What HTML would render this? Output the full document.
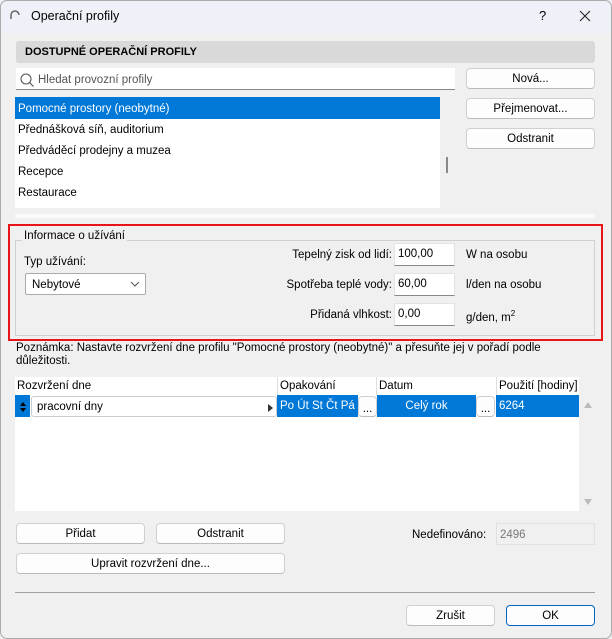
<!DOCTYPE html><html><head><meta charset="utf-8"><style>
*{box-sizing:border-box;margin:0;padding:0}
body{width:612px;height:639px;overflow:hidden;background:#fff;font-family:"Liberation Sans",sans-serif;font-size:11.5px;color:#000;position:relative}
.a{position:absolute}
.win{left:0;top:0;width:612px;height:639px;background:#f0f0f0;overflow:hidden}
.frame{left:0;top:0;width:612px;height:639px;border:1px solid #aaa;border-radius:7px;z-index:5}
.btn{position:absolute;background:#fdfdfd;border:1px solid #d0d0d0;border-bottom-color:#bbb;border-radius:4px;text-align:center;line-height:19px;padding-top:1px}
.inp{position:absolute;background:#fff;border:1px solid #e3e3e3;border-bottom:1px solid #888;padding-left:3px;padding-top:1px;line-height:19px}
.row{position:absolute;left:19px;height:21px;line-height:23px}
.lbl{position:absolute;right:220px;text-align:right}
.blue{position:absolute;background:#0078d7;color:#fff;height:22px;line-height:23px}
</style></head><body>
<div class="a win">
<div class="a" style="left:0;top:0;width:612px;height:33px;background:#eef1f7"></div>
<svg class="a" style="left:9px;top:9px" width="12" height="12"><path d="M2 10 V6 A4 4 0 0 1 10 6" fill="none" stroke="#666" stroke-width="1.5"/></svg>
<div class="a" style="left:31px;top:9px;font-size:12.5px">Operační profily</div>
<div class="a" style="left:539px;top:8px;font-size:13px">?</div>
<svg class="a" style="left:579px;top:10px" width="12" height="12"><path d="M1 1L11 11M11 1L1 11" stroke="#222" stroke-width="1.1"/></svg>

<div class="a" style="left:16px;top:41px;width:579px;height:22px;background:#d9d9d9;border-radius:3px"></div>
<div class="a" style="left:25px;top:46px;font-weight:bold;font-size:11px">DOSTUPNÉ OPERAČNÍ PROFILY</div>

<div class="a" style="left:16px;top:68px;width:439px;height:22px;background:#fff;border-bottom:1px solid #888"></div>
<svg class="a" style="left:19px;top:72px" width="16" height="16"><circle cx="7" cy="7" r="5" fill="none" stroke="#555" stroke-width="1.1"/><path d="M10.5 10.5L14.5 14.5" stroke="#555" stroke-width="1.2"/></svg>
<div class="a" style="left:38px;top:74px;color:#555">Hledat provozní profily</div>

<div class="btn" style="left:466px;top:68px;width:129px;height:21px">Nová...</div>
<div class="btn" style="left:466px;top:98px;width:129px;height:21px">Přejmenovat...</div>
<div class="btn" style="left:466px;top:128px;width:129px;height:21px">Odstranit</div>

<div class="a" style="left:15px;top:97px;width:425px;height:111px;background:#fff"></div>
<div class="a" style="left:15px;top:97px;width:425px;height:22px;background:#0078d7"></div>
<div class="row" style="top:98px;left:18px;color:#fff">Pomocné prostory (neobytné)</div>
<div class="row" style="top:119px;left:18px">Přednášková síň, auditorium</div>
<div class="row" style="top:140px;left:18px">Předváděcí prodejny a muzea</div>
<div class="row" style="top:161px;left:18px">Recepce</div>
<div class="row" style="top:182px;left:18px">Restaurace</div>
<div class="a" style="left:446px;top:157px;width:2px;height:16px;background:#888"></div>
<div class="a" style="left:15px;top:214px;width:580px;height:4px;background:#fafafa"></div>

<div class="a" style="left:8px;top:224px;width:595px;height:117px;border:2px solid #e8141a"></div>
<div class="a" style="left:15px;top:240px;width:580px;height:96px;border:1px solid #d0d0d0"></div>
<div class="a" style="left:22px;top:230px;background:#f0f0f0;padding:0 2px">Informace o užívání</div>
<div class="a" style="left:24px;top:256px">Typ užívání:</div>
<div class="a" style="left:25px;top:273px;width:121px;height:22px;background:#fff;border:1px solid #aaa;border-radius:2px;padding-left:6px;padding-top:1px;line-height:20px">Nebytové</div>
<svg class="a" style="left:130px;top:281px" width="10" height="6"><path d="M1 1L5 5L9 1" fill="none" stroke="#555"/></svg>

<div class="lbl" style="top:249px">Tepelný zisk od lidí:</div>
<div class="lbl" style="top:279px">Spotřeba teplé vody:</div>
<div class="lbl" style="top:309px">Přidaná vlhkost:</div>
<div class="inp" style="left:394px;top:243px;width:61px;height:23px">100,00</div>
<div class="inp" style="left:394px;top:273px;width:61px;height:23px">60,00</div>
<div class="inp" style="left:394px;top:303px;width:61px;height:23px">0,00</div>
<div class="a" style="left:466px;top:249px">W na osobu</div>
<div class="a" style="left:466px;top:279px">l/den na osobu</div>
<div class="a" style="left:466px;top:309px">g/den, m<sup style="font-size:8px">2</sup></div>

<div class="a" style="left:16px;top:342px;width:580px;line-height:13px">Poznámka: Nastavte rozvržení dne profilu "Pomocné prostory (neobytné)" a přesuňte jej v pořadí podle důležitosti.</div>

<div class="a" style="left:15px;top:377px;width:564px;height:134px;background:#fff"></div>
<div class="a" style="left:277px;top:377px;width:1px;height:18px;background:#ddd"></div>
<div class="a" style="left:376px;top:377px;width:1px;height:18px;background:#ddd"></div>
<div class="a" style="left:496px;top:377px;width:1px;height:18px;background:#ddd"></div>
<div class="a" style="left:17px;top:380px">Rozvržení dne</div>
<div class="a" style="left:280px;top:380px">Opakování</div>
<div class="a" style="left:379px;top:380px">Datum</div>
<div class="a" style="left:499px;top:380px;width:80px;overflow:hidden;white-space:nowrap">Použití [hodiny]</div>
<div class="blue" style="left:15px;top:395px;width:15px"></div>
<svg class="a" style="left:19px;top:401px" width="8" height="12"><path d="M1 5L4 1L7 5Z M1 7L4 11L7 7Z" fill="#000"/></svg>
<div class="a" style="left:31px;top:396px;width:246px;height:21px;background:#fff;border:1px solid #ccc;border-radius:3px;padding-left:5px;padding-top:1px;line-height:19px">pracovní dny</div>
<svg class="a" style="left:268px;top:404px" width="5" height="8"><path d="M0 0L5 4L0 8Z" fill="#333"/></svg>
<div class="blue" style="left:277px;top:395px;width:81px;padding-left:3px">Po Út St Čt Pá</div>
<div class="btn" style="left:358px;top:396px;width:19px;height:21px;line-height:22px">...</div>
<div class="blue" style="left:377px;top:395px;width:99px;text-align:center">Celý rok</div>
<div class="btn" style="left:476px;top:396px;width:19px;height:21px;line-height:22px">...</div>
<div class="blue" style="left:496px;top:395px;width:83px;padding-left:3px">6264</div>
<svg class="a" style="left:583px;top:401px" width="10" height="8"><path d="M1 7L5 1L9 7Z" fill="#bbb"/></svg>
<svg class="a" style="left:583px;top:498px" width="10" height="8"><path d="M1 1L5 7L9 1Z" fill="#bbb"/></svg>

<div class="btn" style="left:16px;top:523px;width:129px;height:21px">Přidat</div>
<div class="btn" style="left:156px;top:523px;width:129px;height:21px">Odstranit</div>
<div class="btn" style="left:16px;top:553px;width:269px;height:21px">Upravit rozvržení dne...</div>
<div class="a" style="left:412px;top:529px">Nedefinováno:</div>
<div class="a" style="left:496px;top:523px;width:99px;height:22px;border:1px solid #e0e0e0;color:#777;padding-left:3px;padding-top:1px;line-height:20px">2496</div>

<div class="a" style="left:15px;top:592px;width:580px;height:1px;background:#a0a0a0"></div>
<div class="btn" style="left:406px;top:605px;width:89px;height:21px">Zrušit</div>
<div class="btn" style="left:506px;top:605px;width:89px;height:21px;border:1px solid #0067c0">OK</div>
</div>
<div class="a frame"></div>
</body></html>
